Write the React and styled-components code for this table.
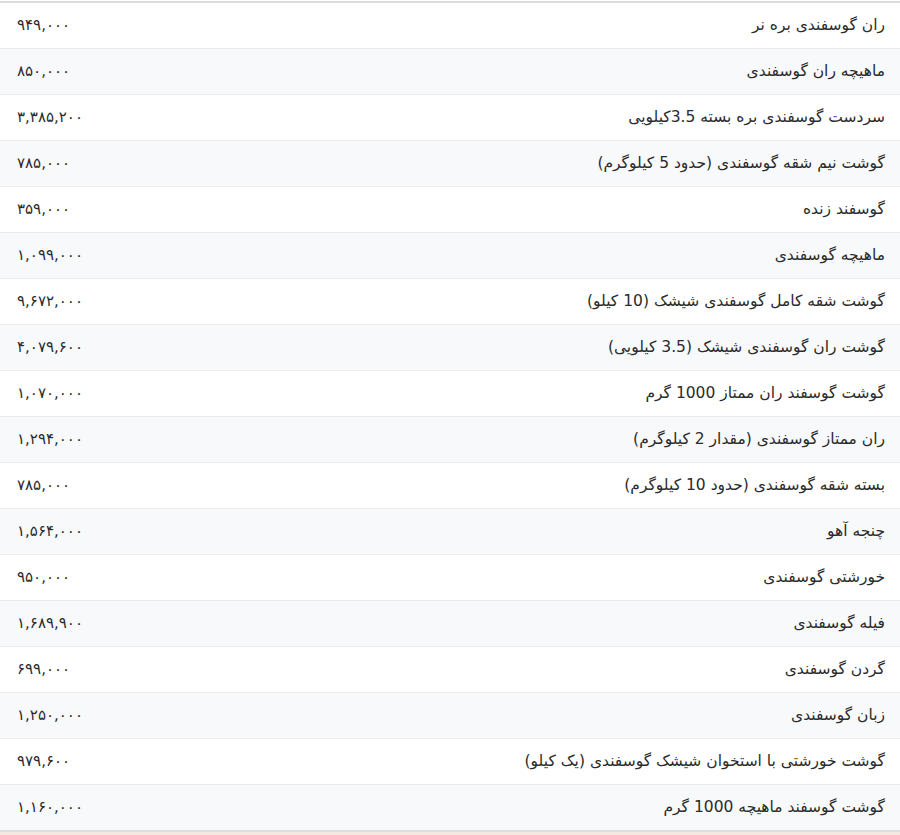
import React from "react";
import styled, { createGlobalStyle } from "styled-components";

const Global = createGlobalStyle`
  html, body { margin: 0; padding: 0; background: #ffffff; }
  body { font-family: "DejaVu Sans", "Noto Sans", sans-serif; color: #333; }
`;

const Page = styled.div`
  width: 900px;
  height: 835px;
  overflow: hidden;
  display: flex;
  flex-direction: column;
  padding-top: 1px;
  box-sizing: border-box;
`;

const Table = styled.div`
  direction: rtl;
  display: flex;
  flex-direction: column;
  border-top: 2px solid #dcdcdc;
  border-bottom: 2px solid #dedede;
`;

const Row = styled.div`
  display: flex;
  align-items: center;
  justify-content: space-between;
  height: 45px;
  padding: 0 15px 0 17px;
  background: ${(p) => (p.$alt ? "#f8f9fa" : "#ffffff")};
  border-top: ${(p) => (p.$first ? "none" : "1px solid #ececec")};
  font-size: 15.5px;
  line-height: 1;
`;

const Name = styled.span`
  color: #2b2b2b;
  white-space: nowrap;
`;

const Price = styled.span`
  color: #2b2b2b;
  white-space: nowrap;
  direction: ltr;
  font-size: 15px;
`;

const Footer = styled.div`
  flex: 1;
  background: #f5e8e1;
`;

const items = [
  ["ران گوسفندی بره نر", "۹۴۹,۰۰۰"],
  ["ماهیچه ران گوسفندی", "۸۵۰,۰۰۰"],
  ["سردست گوسفندی بره بسته 3.5کیلویی", "۳,۳۸۵,۲۰۰"],
  ["گوشت نیم شقه گوسفندی (حدود 5 کیلوگرم)", "۷۸۵,۰۰۰"],
  ["گوسفند زنده", "۳۵۹,۰۰۰"],
  ["ماهیچه گوسفندی", "۱,۰۹۹,۰۰۰"],
  ["گوشت شقه کامل گوسفندی شیشک (10 کیلو)", "۹,۶۷۲,۰۰۰"],
  ["گوشت ران گوسفندی شیشک (3.5 کیلویی)", "۴,۰۷۹,۶۰۰"],
  ["گوشت گوسفند ران ممتاز 1000 گرم", "۱,۰۷۰,۰۰۰"],
  ["ران ممتاز گوسفندی (مقدار 2 کیلوگرم)", "۱,۲۹۴,۰۰۰"],
  ["بسته شقه گوسفندی (حدود 10 کیلوگرم)", "۷۸۵,۰۰۰"],
  ["چنجه آهو", "۱,۵۶۴,۰۰۰"],
  ["خورشتی گوسفندی", "۹۵۰,۰۰۰"],
  ["فیله گوسفندی", "۱,۶۸۹,۹۰۰"],
  ["گردن گوسفندی", "۶۹۹,۰۰۰"],
  ["زبان گوسفندی", "۱,۲۵۰,۰۰۰"],
  ["گوشت خورشتی با استخوان شیشک گوسفندی (یک کیلو)", "۹۷۹,۶۰۰"],
  ["گوشت گوسفند ماهیچه 1000 گرم", "۱,۱۶۰,۰۰۰"],
];

export default function App() {
  return (
    <>
      <Global />
      <Page>
        <Table>
          {items.map(([name, price], i) => (
            <Row key={i} $alt={i % 2 === 1} $first={i === 0}>
              <Name>{name}</Name>
              <Price>{price}</Price>
            </Row>
          ))}
        </Table>
        <Footer />
      </Page>
    </>
  );
}
